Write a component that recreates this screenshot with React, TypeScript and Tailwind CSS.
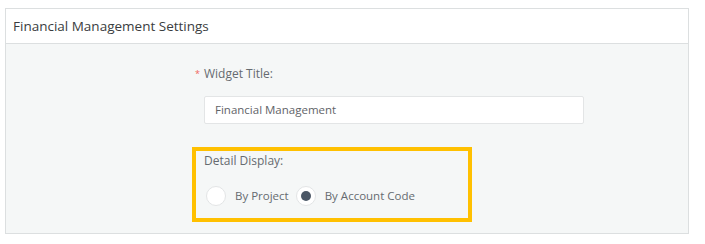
import React from 'react';

const font = { fontFamily: '"Open Sans", "Noto Sans", sans-serif' };

function Radio({ checked, label }: { checked?: boolean; label: string }) {
  return (
    <label className="flex items-center">
      <span className="flex h-[20px] w-[20px] items-center justify-center rounded-full border border-[#e3e5e6] bg-white">
        {checked && <span className="h-[10px] w-[10px] rounded-full bg-[#4b5766]" />}
      </span>
      <span className="ml-[9px] text-[11.5px] leading-[16px] text-[#666b70]">{label}</span>
    </label>
  );
}

export default function App() {
  return (
    <div className="min-h-[244px] w-[705px] bg-white pl-[5px] pt-[8px]" style={font}>
      <div className="w-[684px] border border-[#dcdfe0]">
        <div className="flex h-[35px] items-center border-b border-[#dcdfe0] bg-white pl-[7px]">
          <span className="text-[13.5px] text-[#3a3d40]">Financial Management Settings</span>
        </div>
        <div className="h-[189px] bg-[#f5f7f7] pl-[186px] pt-[22px]">
          <div className="pl-[12px]">
            <div className="flex items-center text-[12px] leading-[16px] text-[#666b70]">
              <span className="-ml-[9px] w-[9px] text-[9px] text-[#f0645a]">*</span>
              Widget Title:
            </div>
            <div className="mt-[14px] flex h-[28px] w-[380px] items-center rounded-[2px] border border-[#e3e5e6] bg-white pl-[10px] text-[11.5px] text-[#5f6368]">
              Financial Management
            </div>
          </div>
          <div className="mt-[23px] w-[280px] border-[4px] border-[#ffc000] pb-[12px] pl-[8px] pt-[2px]">
            <div className="text-[12px] leading-[16px] text-[#666b70]">Detail Display:</div>
            <div className="mt-[17px] flex items-center gap-[7px] pl-[2px]">
              <Radio label="By Project" />
              <Radio checked label="By Account Code" />
            </div>
          </div>
        </div>
      </div>
    </div>
  );
}
